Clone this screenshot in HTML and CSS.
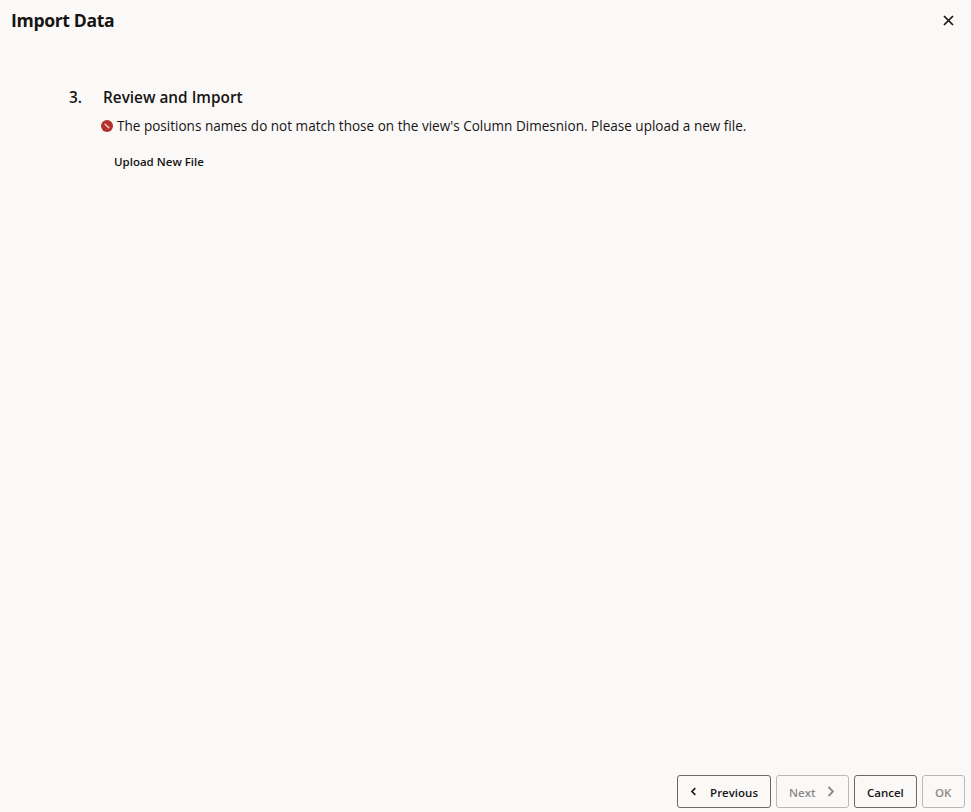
FILE: index.html
```html
<!DOCTYPE html>
<html lang="en">
<head>
<meta charset="utf-8">
<title>Import Data</title>
<link rel="stylesheet" href="styles.css">
</head>
<body>
<div class="dialog">
  <header class="head">
    <h1 class="title">Import Data</h1>
    <button class="close" aria-label="Close"><svg width="11" height="11" viewBox="0 0 11 11"><path d="M1 1l9 9M10 1l-9 9" stroke="#161513" stroke-width="1.7" fill="none"/></svg></button>
  </header>
  <main class="body">
    <div class="step"><span class="num">3.</span><span class="step-title">Review and Import</span></div>
    <div class="msg"><svg class="err" width="12" height="12" viewBox="0 0 12 12"><circle cx="6" cy="6" r="6" fill="#b3312a"/><path d="M3.7 3.7l4.6 4.6" stroke="#f4d9d6" stroke-width="1.3"/></svg><span>The positions names do not match those on the view's Column Dimesnion. Please upload a new file.</span></div>
    <button class="upload">Upload New File</button>
  </main>
  <footer class="foot">
    <button class="btn prev"><svg width="8" height="11" viewBox="0 0 8 11"><path d="M7 1L2.5 5.5 7 10" stroke="#161513" stroke-width="2" fill="none"/></svg>Previous</button>
    <button class="btn next" disabled>Next<svg width="8" height="11" viewBox="0 0 8 11"><path d="M1.5 1L6 5.5 1.5 10" stroke="#8b8985" stroke-width="1.8" fill="none"/></svg></button>
    <button class="btn cancel">Cancel</button>
    <button class="btn ok" disabled>OK</button>
  </footer>
</div>
</body>
</html>
```
FILE: styles.css
```css
* { box-sizing: border-box; }
html, body { margin: 0; height: 100%; }
body { background: #fbf9f8; color: #161513; font-family: "Open Sans", "Noto Sans", sans-serif; }
button { font-family: inherit; }
.dialog { height: 812px; display: flex; flex-direction: column; }
.head { display: flex; justify-content: space-between; align-items: center; padding: 7px 17px 0 11px; height: 33px; }
.title { margin: 0; font-size: 17.6px; font-weight: 700; line-height: 26px; letter-spacing: -0.35px; }
.close { border: 0; background: none; padding: 0; width: 11px; height: 11px; display: flex; }
.body { flex: 1; padding: 51px 0 0 69px; }
.step { display: flex; font-size: 15.35px; font-weight: 600; line-height: 26px; }
.num { width: 34px; }
.msg { display: flex; align-items: center; gap: 4px; margin: 5px 0 0 32px; font-size: 13.55px; line-height: 22px; }
.upload { display: block; margin: 16px 0 0 45px; padding: 0; border: 0; background: none; font-size: 11.5px; font-weight: 600; line-height: 18px; color: #161513; }
.foot { display: flex; justify-content: flex-end; gap: 5px; padding: 0 6px 4px 0; }
.btn { height: 33px; border: 1px solid #6b6965; border-radius: 3px; background: none; font-size: 11.5px; font-weight: 600; color: #161513; padding: 2px 12px 0; display: flex; align-items: center; gap: 11px; }
.btn svg { margin-top: -2px; }
.btn:disabled { border-color: #bbb9b5; color: #8b8985; }
.prev { width: 94px; gap: 14px; }
.next { width: 73px; }
.cancel { width: 63px; }
.ok { width: 43px; }
```
